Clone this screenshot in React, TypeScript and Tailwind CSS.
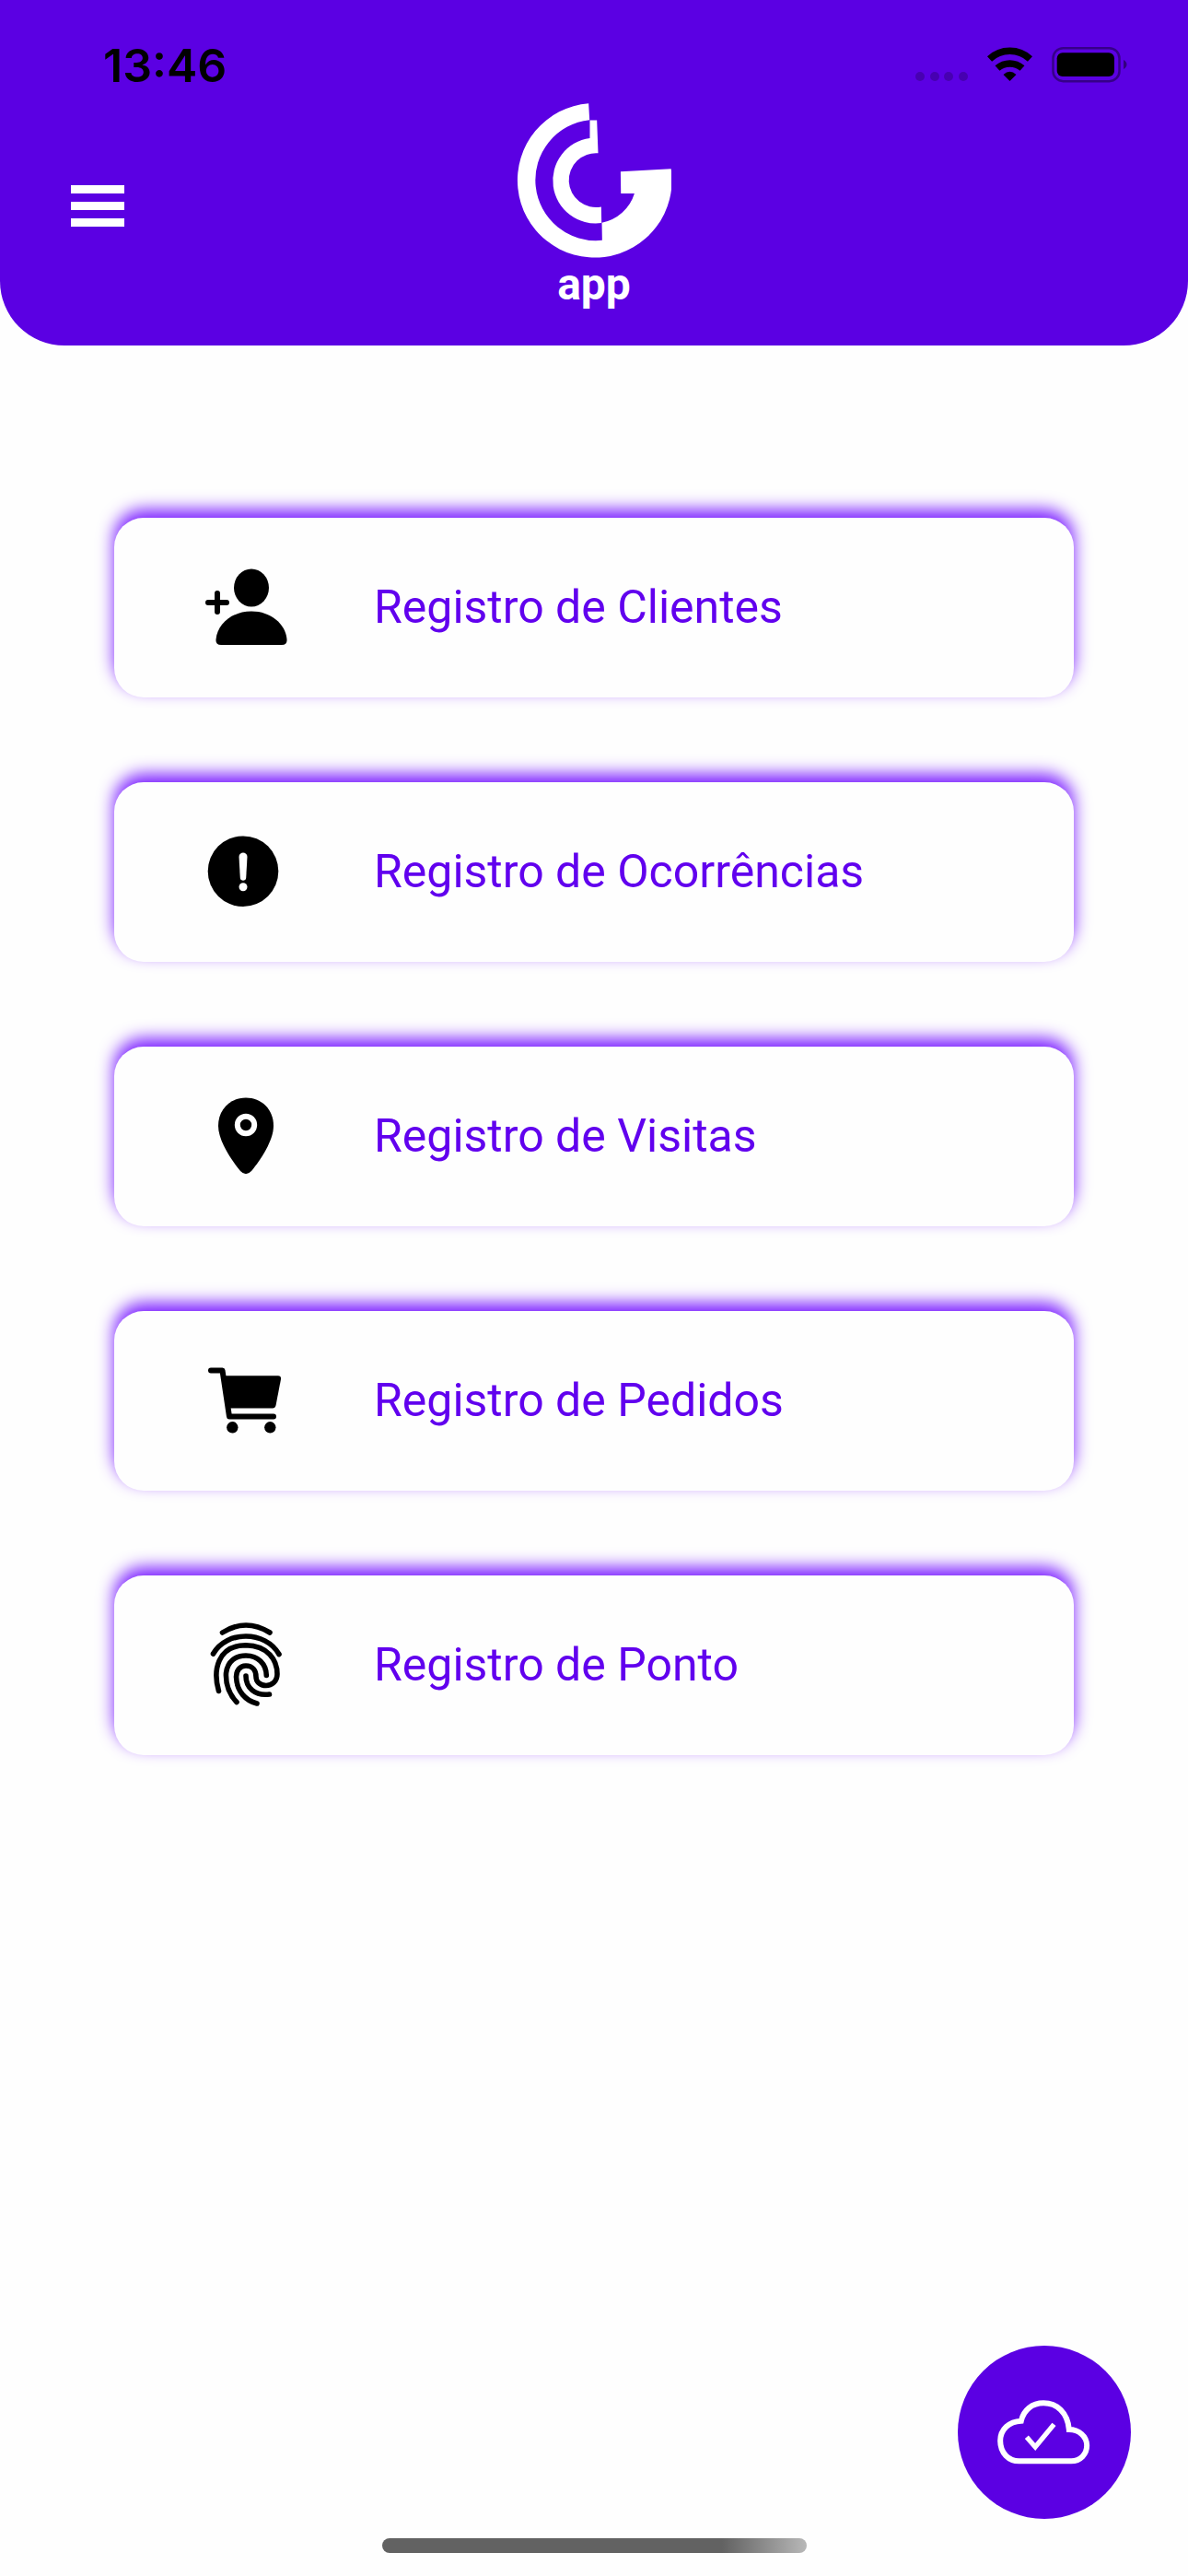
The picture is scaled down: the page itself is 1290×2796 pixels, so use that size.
import type { ReactNode } from 'react';

function StatusBar() {
  return (
    <div className="flex h-15 items-center justify-between pl-28 pr-[66px]">
      <time className="pt-0.5 font-['Inter',sans-serif] text-[50px] leading-15 font-semibold text-black">13:46</time>
      <div className="flex items-center gap-5">
        <svg className="h-10 w-[58px]" viewBox="0 0 58 40" fill="#000" fillOpacity="0.22" aria-hidden="true">
          <circle cx="5" cy="33" r="5" />
          <circle cx="21" cy="33" r="5" />
          <circle cx="36" cy="33" r="5" />
          <circle cx="52" cy="33" r="5" />
        </svg>
        <svg className="h-10 w-[49px]" viewBox="0 0 49 40" fill="none" stroke="#000" strokeWidth="7.5" aria-hidden="true">
          <path d="M2.5 14A32 32 0 0 1 46.5 14" />
          <path d="M11 24A20.5 20.5 0 0 1 38 24" />
          <path d="M17.5 31Q24.5 24.5 31.5 31L24.5 38Z" fill="#000" stroke="none" />
        </svg>
        <svg className="h-10 w-[83px]" viewBox="0 0 83 40" aria-hidden="true">
          <rect x="2.5" y="2.2" width="72" height="36" rx="11" fill="none" stroke="#000" strokeOpacity="0.4" strokeWidth="2.5" />
          <rect x="6.7" y="7.3" width="62.3" height="25.7" rx="6" />
          <path d="M79 15Q82.5 17 82.5 20T79 25Z" fillOpacity="0.45" />
        </svg>
      </div>
    </div>
  );
}

function Logo() {
  return (
    <svg className="size-[168px]" viewBox="128 67 503 502" fill="#fff" aria-hidden="true">
      <path d="M362 67A251 251 0 1 0 630 280L466 289L467 360H511A138 138 0 0 1 405 455L406 512A196 196 0 1 1 365 121Z" />
      <path d="M366 122H389L393 229A88 88 0 1 0 403 403L404 456A138 138 0 1 1 366 180Z" />
    </svg>
  );
}

function Icon({ children }: { children: ReactNode }) {
  return (
    <svg className="size-25 shrink-0" viewBox="0 0 100 100" aria-hidden="true">
      {children}
    </svg>
  );
}

const items = [
  {
    label: 'Registro de Clientes',
    icon: (
      <Icon>
        <ellipse cx="56" cy="28" rx="19" ry="20.5" />
        <path d="M17.5 84C19 67 35 53.5 56 53.5C77 53.5 93 67 94.5 84Q95 90 89 90H23Q17 90 17.5 84Z" />
        <path d="M9 44H29M19 34V54" stroke="#000" strokeWidth="6" strokeLinecap="round" />
      </Icon>
    ),
  },
  {
    label: 'Registro de Ocorrências',
    icon: (
      <Icon>
        <circle cx="47" cy="48.7" r="38.3" />
        <path d="M42.5 33C42.5 27 51.5 27 51.5 33L50.2 56C50 59.5 44 59.5 43.8 56Z" fill="#fff" />
        <circle cx="47" cy="65.7" r="4.5" fill="#fff" />
      </Icon>
    ),
  },
  {
    label: 'Registro de Visitas',
    icon: (
      <Icon>
        <path d="M50 7.5C33 7.5 20 20 20 38C20 54 34 75 44 87Q50 93.5 56 87C66 75 80 54 80 38C80 20 67 7.5 50 7.5Z" />
        <circle cx="50" cy="37" r="9.2" fill="none" stroke="#fff" strokeWidth="6" />
      </Icon>
    ),
  },
  {
    label: 'Registro de Pedidos',
    icon: (
      <Icon>
        <path d="M12 16.5H24.5L32 66.5H80" fill="none" stroke="#000" strokeWidth="6" strokeLinecap="round" strokeLinejoin="round" />
        <path d="M27 22.3H85Q88.5 22.5 88 26L82.5 54.5Q81.8 57.5 79 57.5H32Z" />
        <circle cx="35.3" cy="78.3" r="6.2" />
        <circle cx="76.3" cy="78.3" r="6.2" />
      </Icon>
    ),
  },
  {
    label: 'Registro de Ponto',
    icon: (
      <Icon>
        <g fill="none" stroke="#000" strokeWidth="5.6" strokeLinecap="round">
          <path d="M24.5 14Q50 -2 76 14" />
          <path d="M14.5 37C29 11.500 71 11.500 86 37.500" />
          <path d="M20.500 77.500C14 55 19 28 50 27.700C74 28 84 44 84 59C84 67 78 71.500 72 71.500C65 71.500 61 67 61 62C61 55 57 50 50 50C43 50 39.500 56 39.500 62C40 78 50 88 62 91" />
          <path d="M40 89.500C30 79 28 68 28.500 58C30 45 39 39 50 39C63 39 72 48 72.300 60.500" />
          <path d="M50 61C50 74 60 83 75.500 81" />
        </g>
      </Icon>
    ),
  },
];

export default function App() {
  return (
    <div className="flex min-h-screen flex-col bg-[#fefefe]">
      <header className="rounded-b-[70px] bg-[#5b00e3] pt-10 pb-[41px]">
        <StatusBar />
        <div className="mt-3 grid grid-cols-[1fr_auto_1fr] items-center px-[77px]">
          <button type="button" aria-label="Menu" className="flex w-[58px] flex-col gap-[9px]">
            <span className="h-[9px] bg-white" />
            <span className="h-[9px] bg-white" />
            <span className="h-[9px] bg-white" />
          </button>
          <div className="flex flex-col items-center">
            <Logo />
            <span className="pt-1 font-['Roboto',sans-serif] text-[48px] leading-[50px] font-bold text-white">app</span>
          </div>
        </div>
      </header>

      <main className="flex flex-1 flex-col gap-[92px] px-[124px] pt-[187px]">
        {items.map((item) => (
          <button
            key={item.label}
            type="button"
            className="flex h-[195px] items-center gap-[89px] rounded-[32px] bg-[#fefefe] pl-[93px] text-left shadow-[0_-9px_18px_#7d22ff]"
          >
            {item.icon}
            <span className="pb-0.5 font-['Roboto',sans-serif] text-[50px] leading-15 text-[#6100ee]">{item.label}</span>
          </button>
        ))}
      </main>

      <footer className="flex flex-col gap-[21px] pb-[25px]">
        <button
          type="button"
          aria-label="Sincronizado"
          className="mr-[62px] flex size-47 items-center justify-center self-end rounded-full bg-[#5b00e3]"
        >
          <svg className="h-[76px] w-[107px]" viewBox="244 303 320 228" fill="none" stroke="#fff" strokeWidth="18" aria-hidden="true">
            <path d="M320 511H490C520 511 541 488 541 460C541 430 515 408 483 408C478 352 443 322 400 322C362 322 335 345 327 380C288 382 259 407 259 445C259 485 287 511 320 511Z" />
            <path d="M345 433L373 465L434 391" strokeWidth="16" />
          </svg>
        </button>
        <div className="h-4 w-[461px] self-center rounded-full bg-linear-to-r from-[#626262] from-80% to-[#b8b8b8]" />
      </footer>
    </div>
  );
}
